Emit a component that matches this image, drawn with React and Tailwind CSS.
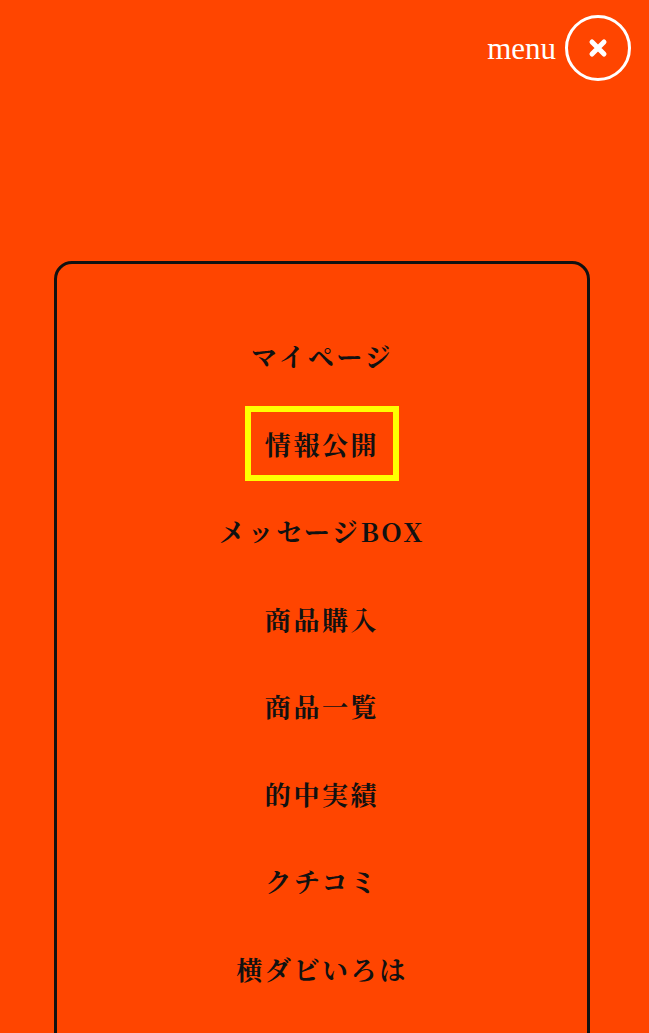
import React from "react";

const items = [
  "マイページ",
  "情報公開",
  "メッセージBOX",
  "商品購入",
  "商品一覧",
  "的中実績",
  "クチコミ",
  "横ダビいろは",
];

const serifJP = {
  fontFamily:
    '"Noto Serif CJK JP", "Liberation Serif", "Noto Sans CJK JP", serif',
};

export default function App() {
  return (
    <div className="min-h-screen w-full bg-[#ff4500] overflow-hidden">
      <header className="flex justify-end items-center gap-[9px] pt-[15px] pr-[18px]">
        <span
          className="text-white text-[31px] leading-none"
          style={{ fontFamily: '"Liberation Serif", serif' }}
        >
          menu
        </span>
        <button className="w-[66px] h-[66px] rounded-full border-[3px] border-white flex items-center justify-center">
          <svg width="20" height="20" viewBox="0 0 20 20">
            <path
              d="M4 4 L16 16 M16 4 L4 16"
              stroke="white"
              strokeWidth="5"
              strokeLinecap="round"
            />
          </svg>
        </button>
      </header>

      <nav className="ml-[54px] w-[536px] mt-[180px] border-[3px] border-[#111] rounded-[18px] bg-[#ff4500] pt-[54px] pb-[80px]">
        <ul className="flex flex-col items-center gap-[12.5px]">
          {items.map((t, i) => (
            <li key={t}>
              <a
                className={
                  "h-[75px] flex items-center px-[14px] border-[6px] text-[#111] text-[26px] font-bold tracking-[0.1em] " +
                  (i === 1 ? "border-[#ffff00]" : "border-transparent")
                }
                style={serifJP}
              >
                {t}
              </a>
            </li>
          ))}
        </ul>
      </nav>
    </div>
  );
}
